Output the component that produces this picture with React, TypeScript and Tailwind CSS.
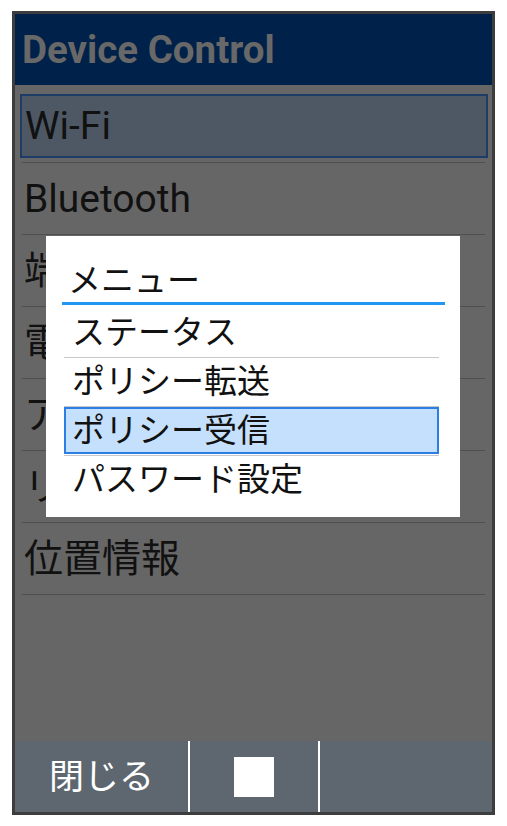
import React from "react";

const jp = "font-['Roboto','Noto_Sans_CJK_JP',sans-serif]";

const rows = ["Wi-Fi", "Bluetooth", "端末情報", "電池", "アプリ", "リセット", "位置情報"];

const menu = ["ステータス", "ポリシー転送", "ポリシー受信", "パスワード設定"];

function MenuDialog() {
  return (
    <div className="absolute left-[31px] top-[222px] w-[414px] h-[281px] bg-white flex flex-col pt-[26px]">
      <div className="pl-[22px] h-[38px] leading-[38px] text-[33px] text-[#111]">メニュー</div>
      <div className="ml-[16px] mr-[15px] mt-[2px] h-[3px] bg-[#2196f3]" />
      <div className="ml-[18px] mr-[21px] mt-[4px] flex flex-col">
        {menu.map((item, i) => {
          const selected = i === 2;
          const last = i === menu.length - 1;
          return (
            <div
              key={item}
              className={"h-[49px] " + (last ? "" : "border-b border-[#c8c8c8]")}
            >
              {selected ? (
                <div className="h-[47px] flex items-center pl-[6px] bg-[#c5e0fc] border-2 border-[#2b7fe3] text-[33px] text-[#111]">
                  {item}
                </div>
              ) : (
                <div className="h-[48px] flex items-center pl-[8px] text-[33px] text-[#111]">
                  {item}
                </div>
              )}
            </div>
          );
        })}
      </div>
    </div>
  );
}

export default function App() {
  return (
    <div className={"min-h-[826px] bg-white pt-[11px] pl-[12px] " + jp}>
      <div className="relative w-[483px] h-[804px] border-[3px] border-[#3d3d3d] flex flex-col">
        <div className="h-[71px] shrink-0 bg-[#00224a] flex items-center pl-[7px]">
          <span className="text-[38.5px] font-bold text-[#686868] font-['Roboto',sans-serif]">Device Control</span>
        </div>

        <div className="flex-1 bg-[#666666] px-[7px] pt-[6px]">
          {rows.map((label, i) => (
            <div key={label} className="h-[72px] border-b border-[#4f4f4f] flex items-center">
              {i === 0 ? (
                <div className="-ml-[2px] -mr-[3px] flex-1 h-[64px] mb-[1px] bg-[#4d5864] border-2 border-[#1d3d66] flex items-center pl-[3px] text-[39px] text-[#111]">
                  {label}
                </div>
              ) : (
                <div className="pl-[2px] pt-[2px] text-[39px] text-[#111]">{label}</div>
              )}
            </div>
          ))}
        </div>

        <div className="h-[71px] shrink-0 bg-[#5e6770] flex">
          <div className="w-[173px] flex items-center justify-center pt-[4px] text-[35px] text-white">閉じる</div>
          <div className="w-[2px] bg-white" />
          <div className="w-[128px] flex items-center justify-center">
            <div className="w-[40px] h-[40px] bg-white" />
          </div>
          <div className="w-[2px] bg-white" />
          <div className="flex-1" />
        </div>

        <MenuDialog />
      </div>
    </div>
  );
}
